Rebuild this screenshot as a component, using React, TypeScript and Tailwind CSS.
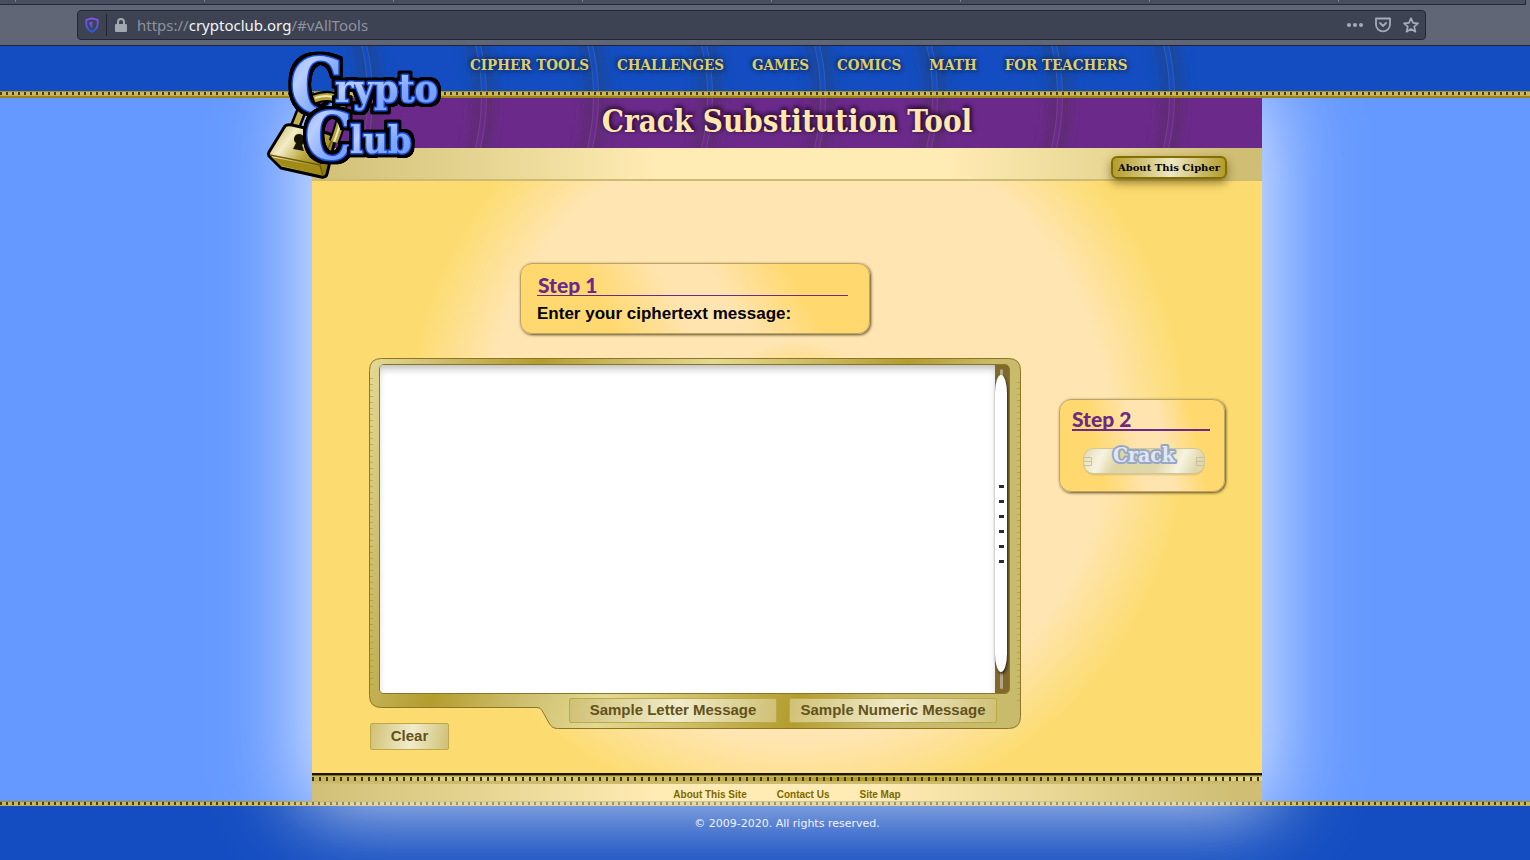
import React from "react";

const SLAB = "font-['DejaVu_Serif_Condensed','DejaVu_Serif',serif]";

const navItems = ["CIPHER TOOLS", "CHALLENGES", "GAMES", "COMICS", "MATH", "FOR TEACHERS"];
const arcOffsets = [96, 210, 322, 436, 549, 661, 786, 898];

function GoldStrip() {
  return (
    <div className="flex h-[7px] flex-col border-t border-[#a38f2b] bg-[#c3b04c]">
      <div className="h-[3px] shrink-0 bg-[repeating-linear-gradient(90deg,#4b3c10_0_2px,#c9b85c_2px_6px)]" />
      <div className="mt-px h-[2px] shrink-0 bg-[#9c8415]" />
    </div>
  );
}

function Arcs({ id, base, shade, flip }: { id: string; base: string; shade: string; flip?: boolean }) {
  const path = (x: number) => (flip ? `M${x + 7} -2Q${x + 7} 27 ${x} 54` : `M${x} -4Q${x + 7} 20 ${x + 7} 50`);
  return (
    <svg className="absolute inset-0 h-full w-full" aria-hidden="true">
      <defs>
        <filter id={id} x="-500%" width="1100%" y="-20%" height="140%">
          <feGaussianBlur stdDeviation="8 0" />
        </filter>
      </defs>
      {arcOffsets.map((x) => (
        <g key={x} fill="none">
          <path d={path(x)} stroke={shade} strokeWidth="17" filter={`url(#${id})`} />
          <path d={path(x)} stroke="#ffffff" strokeOpacity="0.12" strokeWidth="6" />
          <path d={path(x)} stroke={base} strokeWidth="4" />
        </g>
      ))}
    </svg>
  );
}

function LogoText({ x, y, size, children }: { x: number; y: number; size: number; children: string }) {
  return (
    <text
      x={x}
      y={y}
      fontSize={size}
      fontFamily="'DejaVu Serif Condensed','DejaVu Serif',serif"
      fontWeight="700"
      fill="url(#logoBlue)"
      stroke="#1d50d8"
      strokeWidth="2.500"
      strokeLinejoin="round"
      paintOrder="stroke"
      filter="url(#logoOutline)"
    >
      {children}
    </text>
  );
}

function Logo() {
  return (
    <svg viewBox="0 0 180 130" className="block h-[130px] w-[180px] overflow-visible" role="img" aria-label="Crypto Club">
      <defs>
        <linearGradient id="logoBlue" x1="0" y1="0" x2="1" y2="1">
          <stop offset="0" stopColor="#8fb0ff" />
          <stop offset="0.3" stopColor="#b8cdff" />
          <stop offset="0.6" stopColor="#82a8ff" />
          <stop offset="1" stopColor="#6c98ff" />
        </linearGradient>
        <filter id="logoOutline" x="-15%" y="-15%" width="130%" height="130%">
          <feMorphology in="SourceAlpha" operator="dilate" radius="2.500" result="fat" />
          <feGaussianBlur in="fat" stdDeviation="0.500" result="soft" />
          <feComponentTransfer in="soft" result="edge">
            <feFuncA type="linear" slope="1.600" />
          </feComponentTransfer>
          <feMerge>
            <feMergeNode in="edge" />
            <feMergeNode in="SourceGraphic" />
          </feMerge>
        </filter>
        <linearGradient id="lockGold" x1="0" y1="0" x2="1" y2="0.6">
          <stop offset="0" stopColor="#b7a536" />
          <stop offset="0.35" stopColor="#f3edc8" />
          <stop offset="0.65" stopColor="#b9a63c" />
          <stop offset="1" stopColor="#8f7a10" />
        </linearGradient>
      </defs>
      <path d="M28 82L42 47" stroke="#000" strokeWidth="11" fill="none" />
      <path d="M28 82L42 47" stroke="#c3b24c" strokeWidth="6" fill="none" />
      <LogoText x={25} y={62} size={74}>C</LogoText>
      <path d="M20 76Q22 74 27 75L62 83Q69 85 70 90L62 124Q61 128 56 127L16 118L4 106Q3 104 4 102Z" fill="url(#lockGold)" stroke="#000" strokeWidth="3" strokeLinejoin="round" />
      <path d="M6 107L55 117L57 125L17 116Z" fill="#a08b18" />
      <path d="M5 105L55 115L68 88M55 115L58 126" stroke="#6f5c08" strokeWidth="1.500" fill="none" />
      <path d="M34 84a6 6 0 0 1 3 11l2 6-11-2 3-6a5 5 0 0 1 3-9Z" fill="#171302" />
      <path d="M49 49Q69 42 76 54Q80 64 69 92" stroke="#000" strokeWidth="11" fill="none" />
      <path d="M49 49Q69 42 76 54Q80 64 69 92" stroke="#b5a138" strokeWidth="7" fill="none" />
      <path d="M50 48Q69 42 76 54Q80 64 69 92" stroke="#efe8b8" strokeWidth="2" fill="none" />
      <LogoText x={70} y={52} size={39}>rypto</LogoText>
      <LogoText x={40} y={109} size={66}>C</LogoText>
      <LogoText x={85} y={103} size={38}>lub</LogoText>
    </svg>
  );
}

function BrowserBar() {
  return (
    <div className="relative z-20 bg-[#606675]">
      <div className="mr-1 flex h-[5px] gap-[188px] border-r border-b border-[#252a36] bg-[#474e5f] pl-[15px]">
        {Array.from({ length: 8 }, (_, i) => (
          <span key={i} className="h-[2px] w-px shrink-0 bg-[#7b8191]" />
        ))}
      </div>
      <div className="h-[41px] border-b border-[#1f2430] pt-[5px] pr-[104px] pl-[77px]">
        <div className="flex h-[30px] items-center rounded-[4px] border border-[#232732] bg-[#3d4352] px-[6px]">
          <svg viewBox="0 0 14 16" className="ml-px h-4 w-[14px]" aria-hidden="true">
            <defs>
              <linearGradient id="shield" x1="0" y1="0" x2="0" y2="1">
                <stop offset="0" stopColor="#8a4ff0" />
                <stop offset="1" stopColor="#2b5be0" />
              </linearGradient>
            </defs>
            <path d="M7 1.300L12.700 2.800V7Q12.300 12.500 7 14.800Q1.700 12.500 1.300 7V2.800Z" fill="none" stroke="url(#shield)" strokeWidth="1.900" strokeLinejoin="round" />
            <path d="M7.300 4.500V11.700Q4.400 9.500 4.400 7V5.200Z" fill="url(#shield)" />
          </svg>
          <span className="ml-[7px] h-[22px] w-px bg-[#20242e]" />
          <svg viewBox="0 0 12 14" className="ml-2 h-[14px] w-3" aria-hidden="true">
            <path d="M3 7V4a3 3 0 0 1 6 0V7" fill="none" stroke="#a3a7b2" strokeWidth="2" />
            <rect y="6" width="12" height="8" rx="1" fill="#a3a7b2" />
          </svg>
          <a href="#vAllTools" className="ml-[10px] font-['Noto_Sans',sans-serif] text-[15px] leading-5 text-[#8d92a0]">
            https://<span className="text-[#f4f4f6]">cryptoclub.org</span>/#vAllTools
          </a>
          <div className="ml-auto flex items-center gap-3 text-[#a6abb9]">
            <button aria-label="Page actions">
              <svg viewBox="0 0 16 16" className="block size-4" fill="currentColor"><circle cx="2" cy="8" r="2" /><circle cx="8" cy="8" r="2" /><circle cx="14" cy="8" r="2" /></svg>
            </button>
            <button aria-label="Save to Pocket">
              <svg viewBox="0 0 16 16" className="block size-4" fill="none" stroke="currentColor" strokeWidth="1.800" strokeLinecap="round" strokeLinejoin="round"><path d="M1 1.500H15V7.500A7 6.800 0 0 1 1 7.500Z" /><path d="M5 6L8 9L11 6" /></svg>
            </button>
            <button aria-label="Bookmark this page">
              <svg viewBox="0 0 16 16" className="block size-4" fill="none" stroke="currentColor" strokeWidth="1.700" strokeLinejoin="round"><path d="M8 1.200L10 5.800L15 6.300L11.200 9.600L12.400 14.700L8 12L3.600 14.700L4.800 9.600L1 6.300L6 5.800Z" /></svg>
            </button>
          </div>
        </div>
      </div>
    </div>
  );
}

function CipherFrame() {
  return (
    <svg className="absolute inset-x-0 top-0 h-[371px] w-full" viewBox="0 0 652 371" aria-hidden="true">
      <defs>
        <linearGradient id="frameGold" gradientUnits="userSpaceOnUse" x1="0" y1="0" x2="652" y2="211">
          <stop offset="0" stopColor="#e4da96" />
          <stop offset="0.1" stopColor="#cdbd6e" />
          <stop offset="0.24" stopColor="#b39d2e" />
          <stop offset="0.37" stopColor="#cfc070" />
          <stop offset="0.48" stopColor="#e3d991" />
          <stop offset="0.62" stopColor="#cbbb62" />
          <stop offset="0.75" stopColor="#b39d2e" />
          <stop offset="0.87" stopColor="#c9bb6c" />
          <stop offset="1" stopColor="#c9bb6c" />
        </linearGradient>
      </defs>
      <path d="M12.500 0.500H639.500Q651.500 0.500 651.500 12.500V358.500Q651.500 370.500 639.500 370.500H188.500Q183 370.500 180 365L173 352.500Q171.500 349.500 168 349.500H12.500Q0.500 349.500 0.500 337.500V12.500Q0.500 0.500 12.500 0.500Z" fill="url(#frameGold)" stroke="#8d7524" />
      <path d="M2.500 20V330M649.500 24V345" stroke="#a28c33" strokeWidth="3" strokeDasharray="1 5" opacity="0.5" />
    </svg>
  );
}

function ScrollTrack() {
  return (
    <div className="relative w-[14px] bg-[#7f6a2b]">
      <div className="absolute inset-y-1 left-[5px] w-[3px] rounded bg-[#b5a588]" />
      <div className="absolute top-[10px] bottom-[21px] left-0 flex w-[12px] flex-col items-center justify-center gap-[12px] rounded-[50%/18px] bg-white shadow-[1px_2px_3px_#2b2410]">
        {Array.from({ length: 6 }, (_, i) => (
          <span key={i} className="h-[3px] w-[5px] bg-[#2c2c2c]" />
        ))}
      </div>
    </div>
  );
}

const goldButton =
  "shrink-0 rounded-[2px] border border-[#bda94a] bg-[linear-gradient(100deg,#d0c175,#f1ecca_52%,#cfc075)] font-bold text-[#63521c] text-[15px]";

const stepPanel = "rounded-[12px] border border-[#bba564] shadow-[1px_1px_3px_#5c4a20]";

const stepHeading = "font-['Lato',sans-serif] text-[21px] leading-[18px] font-black text-[#6b2a8a]";

export default function App() {
  return (
    <div className="flex min-h-screen flex-col overflow-hidden bg-[#134dc1] font-['Liberation_Sans',Arial,sans-serif]">
      <BrowserBar />

      <header className="relative z-10">
        <div className="bg-[#134dc1]">
          <div className="relative mx-auto h-[45px] max-w-[996px]">
            <Arcs id="arcBlue" base="#134dc1" shade="#1d4590" />
            <nav className={`relative flex gap-7 pt-2 pl-[203px] text-[15px] leading-[22px] font-bold whitespace-nowrap text-[#dfce6c] [text-shadow:-1px_-1px_4px_#0b2250,2px_2px_4px_#17366f] ${SLAB}`}>
              {navItems.map((n) => (
                <a key={n} href="#nav">{n}</a>
              ))}
            </nav>
            <a href="#home" className="absolute top-[4px] left-[-2px] z-10">
              <Logo />
            </a>
          </div>
        </div>
        <GoldStrip />
      </header>

      <div className="bg-[#6699ff]">
        <div className="mx-auto max-w-[996px] pr-px pl-[45px]">
          <main className="relative shadow-[0_0_80px_10px_rgba(255,255,255,0.8)]">
            <div className="relative h-[50px] bg-[#6b2a8a]">
              <div className="absolute inset-y-0 right-0 left-[-45px] [clip-path:inset(0_0_0_45px)]">
                <Arcs id="arcPurple" base="#6b2a8a" shade="#5b2b6d" flip />
              </div>
              <h1 className={`relative pt-1 text-center text-[31px] leading-[38px] font-bold text-[#ffe7ae] [text-shadow:0_-2px_4px_#2a0c38,2px_-1px_4px_#2a0c38] ${SLAB}`}>
                Crack Substitution Tool
              </h1>
            </div>
            <div className="flex h-[33px] justify-end border-b-2 border-[#cdbb72] bg-[linear-gradient(90deg,#d1c077,#e6d592_18%,#ffebb3_36%,#ffebb3_67%,#e6d592_85%,#cfbe74_97%)] pt-2 pr-[35px]">
              <button className="h-[23px] w-[116px] rounded-[6px] border-2 border-[#836e00] bg-[linear-gradient(95deg,#b39c28,#eee8c4_52%,#b09a26)] font-['DejaVu_Serif',serif] text-[10px] leading-[19px] font-bold whitespace-nowrap text-black shadow-[0_4px_10px_rgba(80,60,0,0.6)]">
                About This Cipher
              </button>
            </div>

            <div className="flex gap-[38px] bg-[radial-gradient(circle_at_485px_249px,#fddc80_60px,#ffe5b2_90px,#ffe5b2_310px,#fcdc70_390px)] pt-[82px] pb-[23px] pl-[57px]">
              <div className="w-[652px]">
                <section className={`mx-auto mb-6 h-[71px] w-[350px] bg-[linear-gradient(60deg,#ffd970_25%,#ffe4b0_45%,#ffe4b0_58%,#ffd970_78%)] px-4 pt-3 ${stepPanel}`}>
                  <h2 className={`mr-[5px] h-5 border-b border-[#6b2a8a] pl-px ${stepHeading}`}>
                    Step 1
                  </h2>
                  <label htmlFor="cipher" className="mt-2 block text-[17px] leading-5 font-bold text-black">
                    Enter your ciphertext message:
                  </label>
                </section>
                <div className="relative">
                  <CipherFrame />
                  <div className="relative pt-[6px] pr-[11px] pl-[10px]">
                    <div className="flex h-[330px] overflow-hidden rounded-[5px] border border-[#8d7524]">
                      <textarea id="cipher" className="block min-w-0 flex-1 resize-none bg-white p-2 shadow-[inset_0_6px_8px_-3px_#b5b5b5] outline-none" />
                      <ScrollTrack />
                    </div>
                  </div>
                  <div className="relative flex items-start pt-1 pl-px">
                    <button className={`mt-[25px] mr-[120px] h-[27px] w-[79px] ${goldButton}`}>Clear</button>
                    <button className={`mr-3 h-[25px] w-[208px] ${goldButton}`}>Sample Letter Message</button>
                    <button className={`h-[25px] w-[208px] ${goldButton}`}>Sample Numeric Message</button>
                  </div>
                </div>
              </div>

              <section className={`mt-[136px] h-[93px] w-[166px] bg-[linear-gradient(78deg,#ffd970_25%,#ffe4b0_48%,#ffe4b0_62%,#ffd970_80%)] px-3 pt-[10px] ${stepPanel}`}>
                <h2 className={`mr-[2px] h-[21px] border-b-2 border-[#6b2a8a] ${stepHeading}`}>
                  Step 2
                </h2>
                <button className="mt-[10px] ml-[10px] block" aria-label="Crack">
                  <svg viewBox="0 0 124 40" className="block h-10 w-[124px] overflow-visible" aria-hidden="true">
                    <defs>
                      <linearGradient id="plate" x1="0" x2="1" y1="0" y2="0.1">
                        <stop offset="0" stopColor="#e3dab0" />
                        <stop offset="0.18" stopColor="#f8f3e0" />
                        <stop offset="0.32" stopColor="#dfd6a6" />
                        <stop offset="0.66" stopColor="#e0d7aa" />
                        <stop offset="0.85" stopColor="#f8f3e0" />
                        <stop offset="1" stopColor="#e0d7aa" />
                      </linearGradient>
                    </defs>
                    <rect x="1.500" y="8.500" width="121" height="26" rx="11" fill="#c2a45a" opacity="0.4" />
                    <rect x="1.500" y="7.500" width="121" height="25" rx="10" fill="url(#plate)" stroke="#cfc69c" />
                    <path d="M2 16.500H9.500V24.500H2M2 20.500H9.500M122 16.500H114.500V24.500H122M122 20.500H114.500" fill="none" stroke="#c8c1a2" />
                    <text x="62" y="21" textAnchor="middle" fontFamily="'DejaVu Serif Condensed','DejaVu Serif',serif" fontWeight="700" fontSize="21" fill="#dfe8f8" stroke="#9aa7c2" strokeWidth="4" paintOrder="stroke" strokeLinejoin="round">Crack</text>
                  </svg>
                </button>
              </section>
            </div>

            <div className="border-t-2 border-[#1c1700] bg-[#8b7714] pt-px">
              <div className="h-[6px] border-y border-[#c8b75e] bg-[repeating-linear-gradient(90deg,#40340a_0_2px,transparent_2px_7px),linear-gradient(90deg,#c6b452,#ddd38e_17%,#cdbd60_33%,#b09a1f_58%,#ddd38e_97%)]" />
            </div>
            <div className="flex h-[19px] justify-center gap-[30px] border-t-2 border-[#cdbb72] bg-[linear-gradient(90deg,#d1c077,#e6d592_18%,#ffebb3_36%,#ffebb3_60%,#e6d592_80%,#cfbe74_97%)] pt-[3px] text-[10px] leading-4 font-bold text-[#7d6800]">
              <a href="#about">About This Site</a>
              <a href="#contact">Contact Us</a>
              <a href="#map">Site Map</a>
            </div>
          </main>
        </div>
      </div>

      <footer className="flex-1">
        <div className="h-[5px] overflow-hidden">
          <GoldStrip />
        </div>
        <div className="mx-auto max-w-[996px] pr-px pl-[45px]">
          <p className="relative pt-[10px] text-center font-['DejaVu_Sans',sans-serif] text-[11px] leading-4 text-[#f0f4ff]">
            © 2009-2020. All rights reserved.
          </p>
        </div>
      </footer>
    </div>
  );
}
